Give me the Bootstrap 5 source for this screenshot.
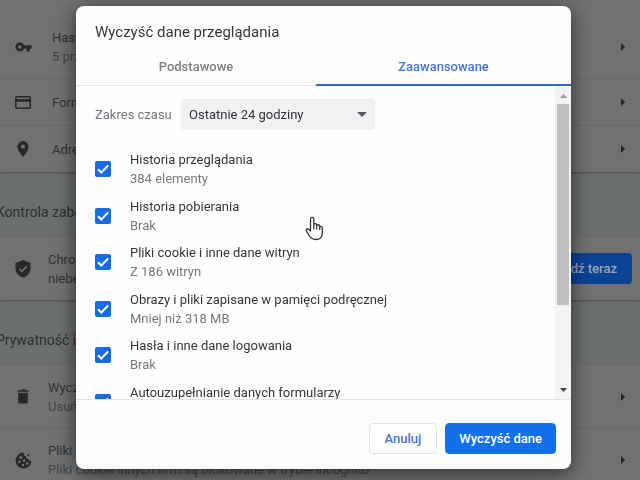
<!DOCTYPE html>
<html lang="pl">
<head>
<meta charset="utf-8">
<meta name="viewport" content="width=device-width, initial-scale=1">
<title>Wyczyść dane przeglądania</title>
<link href="https://cdn.jsdelivr.net/npm/bootstrap@5.3.0/dist/css/bootstrap.min.css" rel="stylesheet">
<style>
  body { font-family: Roboto, "Liberation Sans", sans-serif; font-size: 13px; line-height: 19px; color: #303336; background: #6b6f6e; height: 100vh; overflow: hidden; }
  .settings { white-space: nowrap; }
  .panel { background: #707170; box-shadow: 0 1px 2px #484848; }
  .panel:first-child { padding-top: 15px; }
  .entry { min-height: 47px; padding-right: 15px; }
  .entry.tall { min-height: 63px; }
  .entry + .entry { border-top: 1px solid #696969; }
  .entry-icon { width: 46px; flex: none; display: flex; justify-content: center; color: #26282a; }
  .entry-text { flex: 1; min-width: 0; padding-left: 6px; }
  .entry-text.near { padding-left: 2px; }
  .sub { color: #44474a; }
  .section-title { font-size: 14px; line-height: 20px; font-weight: 400; margin: 0 0 0 -4px; padding: 30px 0 15px; color: #2c2f31; }
  .btn-dim { background: #0b4396; color: #9aa3ae; font-size: 13px; font-weight: 500; line-height: 19px; padding: 6px 15px; border: 0; border-radius: 4px; }
  .chevron { width: 4px; height: 8px; color: #252525; flex: none; }

  .overlay { position: fixed; inset: 0; padding: 6px 69px 11px 76px; display: flex; }
  .dialog { background: #fefefe; border-radius: 8px; box-shadow: 0 4px 20px rgba(0,0,0,.6); color: #333639; overflow: hidden; }
  .dialog-title { font-size: 15px; line-height: 20px; font-weight: 400; margin: 0; padding: 16px 19px 13px; }
  .tabs { border-bottom: 1px solid #e2e3e4; }
  .tabs .nav-link { width: 100%; border: 0; border-radius: 0; background: none; color: #7d8083; font-size: 13px; font-weight: 500; line-height: 19px; padding: 2px 0 8px; border-bottom: 2px solid transparent; }
  .tabs .nav-item { flex: 16 1 0; margin-bottom: -1px; }
  .tabs .nav-item + .nav-item { flex: 17 1 0; }
  .tabs .nav-link.active { color: #4474cf; border-bottom-color: #2e6cb8; }
  .scroller { min-height: 0; overflow: hidden; padding: 13px 19px 0; }
  .range-label { color: #72757a; width: 86px; flex: none; }
  .range { width: 194px; height: 31px; border: 0; border-radius: 4px; font-size: 13px; line-height: 19px; padding: 6px 28px 6px 8px; color: #333639; background-color: #f0f1f3;
    background-image: url("data:image/svg+xml,%3Csvg xmlns='http://www.w3.org/2000/svg' viewBox='0 0 10 5'%3E%3Cpath d='M0 0h10L5 5z' fill='%2355585c'/%3E%3C/svg%3E"); background-size: 10px 5px; background-position: right 8px center; }
  .options { display: grid; grid-auto-rows: 1fr; min-height: 279px; flex: none; }
  .option { display: flex; align-items: center; padding: 0; margin: 0; min-height: 0; }
  .option .form-check-input { width: 16px; height: 16px; margin: 0 19px 0 0; float: none; flex: none; border: 0; border-radius: 2px; }
  .option .form-check-input:checked { background-color: #176ce4; background-size: 16px 16px;
    background-image: url("data:image/svg+xml,%3Csvg xmlns='http://www.w3.org/2000/svg' viewBox='0 0 16 16'%3E%3Cpath d='M3 8.2l3.3 3.3L13.2 4.400' fill='none' stroke='white' stroke-width='2'/%3E%3C/svg%3E"); }
  .option-detail { color: #75787c; }
  .scrollbar { width: 16px; flex: none; background: #f3f3f3; display: flex; flex-direction: column; align-items: center; padding: 8px 1px 7px 1px; }
  .scroll-thumb { width: 12px; flex: 0 0 201px; margin: 6px 0 auto; background: #c1c1c1; }
  .actions { border-top: 1px solid #e2e3e4; padding: 23px 15px 15px; gap: 8px; }
  .actions .btn { font-size: 13px; font-weight: 500; line-height: 19px; padding: 5px 15px; border-radius: 4px; }
  .actions .btn-cancel { color: #4674c9; border-color: #dfe1e5; background: #fff; }
  .actions .btn-clear { color: #fff; background: #1470e8; border-color: #1470e8; padding: 5px 13px; }
  .pointer { position: fixed; left: 305px; top: 216px; width: 19px; height: 25px; pointer-events: none; }
</style>
<script src="https://cdn.jsdelivr.net/npm/bootstrap@5.3.0/dist/js/bootstrap.bundle.min.js" defer></script>
</head>
<body>
<main class="settings">
  <section class="panel">
    <div class="entry tall d-flex align-items-center">
      <span class="entry-icon"><svg width="17" height="10" viewBox="0 0 17 10"><path fill="currentColor" fill-rule="evenodd" d="M9 3.200A4.500 4.500 0 1 0 9 6.700h2.500V9.500h3.200V6.700H16.500V3.200zM4.800 3.200a1.800 1.800 0 1 1 0 3.600 1.800 1.800 0 0 1 0-3.600z"/></svg></span>
      <div class="entry-text">Hasła<div class="sub">5 przejętych haseł</div></div>
      <svg class="chevron" viewBox="0 0 4 8"><path fill="currentColor" d="M0 0l4 4-4 4z"/></svg>
    </div>
    <div class="entry d-flex align-items-center">
      <span class="entry-icon"><svg width="16" height="13" viewBox="0 0 16 13"><rect x=".8" y=".8" width="14.400" height="11.400" rx="1" fill="none" stroke="currentColor" stroke-width="1.500"/><path fill="currentColor" d="M1 3.200h14v2.600H1z"/></svg></span>
      <div class="entry-text">Formy płatności</div>
      <svg class="chevron" viewBox="0 0 4 8"><path fill="currentColor" d="M0 0l4 4-4 4z"/></svg>
    </div>
    <div class="entry d-flex align-items-center">
      <span class="entry-icon"><svg width="12" height="16" viewBox="0 0 12 16"><path fill="currentColor" fill-rule="evenodd" d="M6 0a5.600 5.600 0 0 0-5.600 5.600C.4 9.800 6 16 6 16s5.600-6.200 5.600-10.400A5.600 5.600 0 0 0 6 0zm0 3.600a2 2 0 1 1 0 4 2 2 0 0 1 0-4z"/></svg></span>
      <div class="entry-text">Adresy i inne</div>
      <svg class="chevron" viewBox="0 0 4 8"><path fill="currentColor" d="M0 0l4 4-4 4z"/></svg>
    </div>
  </section>
  <h2 class="section-title">Kontrola zabezpieczeń</h2>
  <section class="panel">
    <div class="entry tall d-flex align-items-center pe-2">
      <span class="entry-icon"><svg width="16" height="18" viewBox="0 0 16 18"><path fill="currentColor" d="M8 0l7.500 3v5.200c0 4.400-3 7.900-7.500 9.300C3.500 16.100.5 12.600.5 8.200V3z"/><path fill="none" stroke="#707170" stroke-width="1.600" d="M4.200 8.800l2.600 2.600 5-5"/></svg></span>
      <div class="entry-text near">Chrome chroni Cię przed<div>niebezpieczeństwem</div></div>
      <button type="button" class="btn btn-dim">Sprawdź teraz</button>
    </div>
  </section>
  <h2 class="section-title">Prywatność i bezpieczeństwo</h2>
  <section class="panel">
    <div class="entry tall d-flex align-items-center">
      <span class="entry-icon"><svg width="12" height="15" viewBox="0 0 12 15"><path fill="currentColor" d="M.5 1.200h3.200L4.500.3h3l.8.9h3.200v1.500H.5zM1.200 3.700h9.600v9.300c0 .9-.6 1.500-1.500 1.500H2.700c-.9 0-1.500-.6-1.500-1.500z"/></svg></span>
      <div class="entry-text near">Wyczyść dane<div class="sub">Usuń historię</div></div>
      <svg class="chevron" viewBox="0 0 4 8"><path fill="currentColor" d="M0 0l4 4-4 4z"/></svg>
    </div>
    <div class="entry tall d-flex align-items-center">
      <span class="entry-icon"><svg width="17" height="17" viewBox="0 0 17 17"><path fill="currentColor" d="M8.800.5a8 8 0 1 0 7.700 8.200c-1.500.5-2.700-.3-2.900-1.700-1.700.3-2.700-.8-2.400-2.400C9.400 4.500 8.300 2.500 8.800.5z"/><g fill="#707170"><circle cx="5.800" cy="5.500" r="1.400"/><circle cx="4.500" cy="9.800" r="1.300"/><circle cx="9" cy="8.800" r="1.300"/><circle cx="8" cy="13" r="1.300"/><circle cx="12.300" cy="11.600" r="1.300"/></g><circle cx="13.300" cy="3.300" r="1" fill="currentColor"/></svg></span>
      <div class="entry-text near">Pliki cookie<div class="sub">Pliki cookie innych firm są blokowane w trybie incognito</div></div>
      <svg class="chevron" viewBox="0 0 4 8"><path fill="currentColor" d="M0 0l4 4-4 4z"/></svg>
    </div>
  </section>
</main>

<div class="overlay">
  <div class="dialog d-flex flex-column flex-fill" role="dialog" aria-modal="true" aria-labelledby="dialogTitle">
    <h1 class="dialog-title" id="dialogTitle">Wyczyść dane przeglądania</h1>
    <ul class="nav tabs" role="tablist">
      <li class="nav-item" role="presentation"><button type="button" class="nav-link" role="tab" aria-selected="false">Podstawowe</button></li>
      <li class="nav-item" role="presentation"><button type="button" class="nav-link active" role="tab" aria-selected="true">Zaawansowane</button></li>
    </ul>
    <div class="d-flex flex-fill overflow-hidden">
      <div class="scroller d-flex flex-column flex-fill">
        <div class="d-flex align-items-center">
          <label class="range-label" for="range">Zakres czasu</label>
          <select class="form-select range" id="range"><option>Ostatnie 24 godziny</option><option>Ostatnie 7 dni</option></select>
        </div>
        <div class="mt-3 options">
          <div class="form-check option"><input class="form-check-input" type="checkbox" id="o1" checked><label for="o1">Historia przeglądania<span class="d-block option-detail">384 elementy</span></label></div>
          <div class="form-check option"><input class="form-check-input" type="checkbox" id="o2" checked><label for="o2">Historia pobierania<span class="d-block option-detail">Brak</span></label></div>
          <div class="form-check option"><input class="form-check-input" type="checkbox" id="o3" checked><label for="o3">Pliki cookie i inne dane witryn<span class="d-block option-detail">Z 186 witryn</span></label></div>
          <div class="form-check option"><input class="form-check-input" type="checkbox" id="o4" checked><label for="o4">Obrazy i pliki zapisane w pamięci podręcznej<span class="d-block option-detail">Mniej niż 318 MB</span></label></div>
          <div class="form-check option"><input class="form-check-input" type="checkbox" id="o5" checked><label for="o5">Hasła i inne dane logowania<span class="d-block option-detail">Brak</span></label></div>
          <div class="form-check option"><input class="form-check-input" type="checkbox" id="o6" checked><label for="o6">Autouzupełnianie danych formularzy<span class="d-block option-detail">&nbsp;</span></label></div>
        </div>
      </div>
      <div class="scrollbar" aria-hidden="true">
        <svg width="7" height="4" viewBox="0 0 7 4"><path fill="#9b9b9b" d="M0 4h7L3.500 0z"/></svg>
        <div class="scroll-thumb"></div>
        <svg width="7" height="4" viewBox="0 0 7 4"><path fill="#444" d="M0 0h7L3.500 4z"/></svg>
      </div>
    </div>
    <div class="actions d-flex justify-content-end">
      <button type="button" class="btn btn-cancel">Anuluj</button>
      <button type="button" class="btn btn-clear">Wyczyść dane</button>
    </div>
  </div>
</div>
<svg class="pointer" viewBox="0 0 19 25" aria-hidden="true"><path fill="#fff" stroke="#333" stroke-width="1.300" stroke-linejoin="round" stroke-linecap="round" d="M5.500 15V3.200C5.500.8 8.800.8 8.800 3.200V9c0-2 3-1.700 3 0v.8c.2-1.600 2.900-1.300 2.900.4v1c.4-1.300 2.600-1 2.600.7v5c0 4-2.500 6.600-6.600 6.600-3.500 0-5.200-1.700-6.700-4.300L1.400 14.800c-.9-1.600 1-2.700 2.200-1.500zM8.800 9v4M11.800 9.800V13M14.700 11v2.500"/></svg>
</body>
</html>
